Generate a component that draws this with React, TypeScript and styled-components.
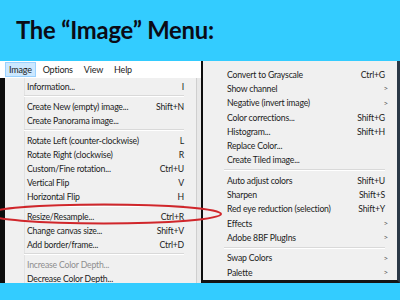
import React from 'react';
import { styled, createGlobalStyle } from 'styled-components';

type Item =
	| { kind: 'item'; label: string; key?: string; sub?: boolean; disabled?: boolean }
	| { kind: 'sep' };

const leftItems: Item[] = [
	{ kind: 'item', label: 'Information...', key: 'I' },
	{ kind: 'sep' },
	{ kind: 'item', label: 'Create New (empty) image...', key: 'Shift+N' },
	{ kind: 'item', label: 'Create Panorama image...' },
	{ kind: 'sep' },
	{ kind: 'item', label: 'Rotate Left (counter-clockwise)', key: 'L' },
	{ kind: 'item', label: 'Rotate Right (clockwise)', key: 'R' },
	{ kind: 'item', label: 'Custom/Fine rotation...', key: 'Ctrl+U' },
	{ kind: 'item', label: 'Vertical Flip', key: 'V' },
	{ kind: 'item', label: 'Horizontal Flip', key: 'H' },
	{ kind: 'sep' },
	{ kind: 'item', label: 'Resize/Resample...', key: 'Ctrl+R' },
	{ kind: 'item', label: 'Change canvas size...', key: 'Shift+V' },
	{ kind: 'item', label: 'Add border/frame...', key: 'Ctrl+D' },
	{ kind: 'sep' },
	{ kind: 'item', label: 'Increase Color Depth...', disabled: true },
	{ kind: 'item', label: 'Decrease Color Depth...' },
];

const rightItems: Item[] = [
	{ kind: 'item', label: 'Convert to Grayscale', key: 'Ctrl+G' },
	{ kind: 'item', label: 'Show channel', sub: true },
	{ kind: 'item', label: 'Negative (invert image)', sub: true },
	{ kind: 'item', label: 'Color corrections...', key: 'Shift+G' },
	{ kind: 'item', label: 'Histogram...', key: 'Shift+H' },
	{ kind: 'item', label: 'Replace Color...' },
	{ kind: 'item', label: 'Create Tiled image...' },
	{ kind: 'sep' },
	{ kind: 'item', label: 'Auto adjust colors', key: 'Shift+U' },
	{ kind: 'item', label: 'Sharpen', key: 'Shift+S' },
	{ kind: 'item', label: 'Red eye reduction (selection)', key: 'Shift+Y' },
	{ kind: 'item', label: 'Effects', sub: true },
	{ kind: 'item', label: 'Adobe 8BF PlugIns', sub: true },
	{ kind: 'sep' },
	{ kind: 'item', label: 'Swap Colors', sub: true },
	{ kind: 'item', label: 'Palette', sub: true },
];

function MenuList({ items, rowHeight }: { items: Item[]; rowHeight: number }) {
	return (
		<>
			{items.map((it, i) =>
				it.kind === 'sep' ? (
					<Separator key={i} />
				) : (
					<Row key={i} $h={rowHeight} $disabled={it.disabled}>
						<span>{it.label}</span>
						{it.sub ? <Arrow>&gt;</Arrow> : <span>{it.key}</span>}
					</Row>
				)
			)}
		</>
	);
}

function App() {
	return (
		<>
			<GlobalStyle />
			<Page>
				<Title>The “Image” Menu:</Title>
				<Shots>
					<LeftShot>
						<MenuBar>
							<BarItem $active>Image</BarItem>
							<BarItem>Options</BarItem>
							<BarItem>View</BarItem>
							<BarItem>Help</BarItem>
						</MenuBar>
						<LeftBody>
							<BlackStrip />
							<Dropdown>
								<MenuList items={leftItems} rowHeight={14} />
							</Dropdown>
							<BehindStrip />
						</LeftBody>
					</LeftShot>
					<RightPanel>
						<MenuList items={rightItems} rowHeight={14.3} />
					</RightPanel>
				</Shots>
				<Ring viewBox='0 0 400 300' width='400' height='300'>
					<ellipse cx='104' cy='214' rx='117' ry='9.5' fill='none' stroke='#d0262b' strokeWidth='2' />
				</Ring>
			</Page>
		</>
	);
}

export default App;

const GlobalStyle = createGlobalStyle`
	html, body {
		margin: 0;
		padding: 0;
		background: #33ccff;
	}
`;

const Page = styled.div`
	position: relative;
	width: 400px;
	height: 300px;
	overflow: hidden;
	background: #33ccff;
	display: flex;
	flex-direction: column;
`;

const Title = styled.h1`
	margin: 0;
	height: 61px;
	box-sizing: border-box;
	padding: 16px 0 0 16px;
	font-family: Lato, 'Open Sans', sans-serif;
	font-weight: 700;
	font-size: 23.8px;
	letter-spacing: -0.2px;
	color: #0b0b16;
`;

const Shots = styled.div`
	display: flex;
	height: 222px;
	font-family: Lato, 'Noto Sans', sans-serif;
	font-size: 8.7px;
	letter-spacing: -0.2px;
	color: #1c1c1c;
`;

const LeftShot = styled.div`
	width: 201px;
	flex-shrink: 0;
	display: flex;
	flex-direction: column;
	overflow: hidden;
`;

const MenuBar = styled.div`
	height: 17px;
	background: #fff;
	display: flex;
	align-items: center;
	padding-left: 5px;
	flex-shrink: 0;
	font-size: 9px;
`;

const BarItem = styled.div<{ $active?: boolean }>`
	padding: 0 3px;
	margin-right: 3px;
	height: 15px;
	line-height: 14px;
	box-sizing: border-box;
	border: 1px solid ${(p) => (p.$active ? '#99d1ff' : 'transparent')};
	background: ${(p) => (p.$active ? '#cce8ff' : 'transparent')};
`;

const LeftBody = styled.div`
	flex: 1;
	display: flex;
	min-height: 0;
`;

const BlackStrip = styled.div`
	width: 5px;
	background: #0d0d0d;
`;

const Dropdown = styled.div`
	width: 192px;
	flex-shrink: 0;
	box-sizing: border-box;
	background: #f0f0f0;
	border-right: 1px solid #cfcfcf;
	padding: 1px 12px 0 19px;
	background-image: linear-gradient(#e2e2e2, #e2e2e2);
	background-size: 1px 100%;
	background-position: 19px 0;
	background-repeat: no-repeat;
`;

const BehindStrip = styled.div`
	flex: 1;
	background: #e8e8e8;
`;

const RightPanel = styled.div`
	flex: 1;
	min-width: 0;
	box-sizing: border-box;
	background: #f0f0f0;
	border-left: 2px solid #0e0e0e;
	border-bottom: 3px solid #141414;
	border-right: 3px solid #2a3846;
	padding: 6px 12px 0 21px;
`;

const Row = styled.div<{ $h: number; $disabled?: boolean }>`
	height: ${(p) => p.$h}px;
	padding-left: 3px;
	display: flex;
	align-items: center;
	justify-content: space-between;
	white-space: nowrap;
	color: ${(p) => (p.$disabled ? '#8e8e8e' : '#1c1c1c')};
`;

const Arrow = styled.span`
	font-size: 8px;
	color: #555;
	margin-right: -3px;
`;

const Separator = styled.div`
	height: 1px;
	margin: 2px 0 2px;
	background: #d9d9d9;
	border-bottom: 1px solid #fff;
`;

const Ring = styled.svg`
	position: absolute;
	left: 0;
	top: 0;
	pointer-events: none;
`;
